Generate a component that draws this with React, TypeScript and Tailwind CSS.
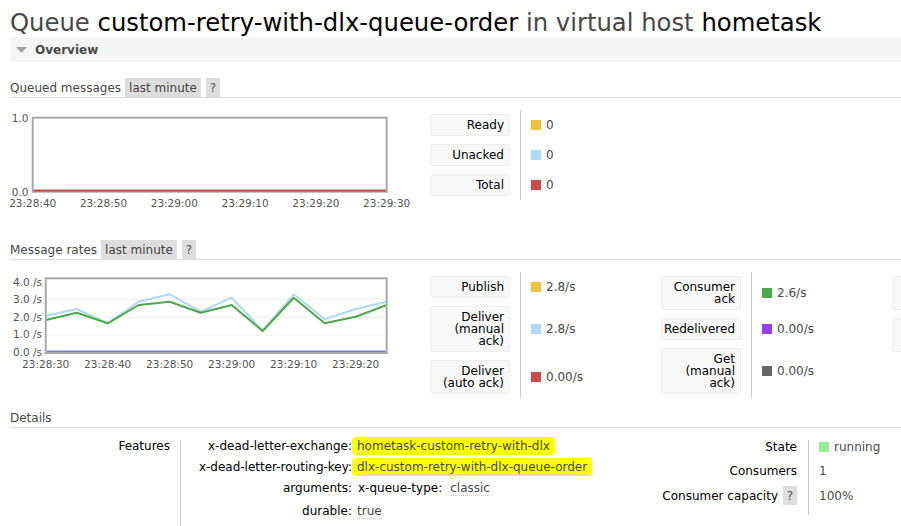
// RabbitMQ management — queue detail page
import { Fragment } from 'react';

type Stat = { lines: string[]; sq: string; value: string };

const queued: Stat[] = [
  { lines: ['Ready'], sq: 'bg-[#edc240]', value: '0' },
  { lines: ['Unacked'], sq: 'bg-[#afd8f8]', value: '0' },
  { lines: ['Total'], sq: 'bg-[#cb4b4b]', value: '0' },
];

const ratesA: Stat[] = [
  { lines: ['Publish'], sq: 'bg-[#edc240]', value: '2.8/s' },
  { lines: ['Deliver', '(manual', 'ack)'], sq: 'bg-[#afd8f8]', value: '2.8/s' },
  { lines: ['Deliver', '(auto ack)'], sq: 'bg-[#cb4b4b]', value: '0.00/s' },
];

const ratesB: Stat[] = [
  { lines: ['Consumer', 'ack'], sq: 'bg-[#4da74d]', value: '2.6/s' },
  { lines: ['Redelivered'], sq: 'bg-[#9440ed]', value: '0.00/s' },
  { lines: ['Get', '(manual', 'ack)'], sq: 'bg-[#666666]', value: '0.00/s' },
];

const ratesC: Stat[] = [
  { lines: ['Get', '(auto ack)'], sq: 'bg-[#bd9b33]', value: '0.00/s' },
  { lines: ['Get', '(empty)'], sq: 'bg-[#8cacc6]', value: '0.00/s' },
];

// rate chart samples, already in svg pixels
const blueY = [44, 37, 51.3, 29.7, 22.3, 39.7, 25.7, 58.7, 22.3, 47.3, 37, 29.7];
const greenY = [48, 40.7, 51.3, 33, 29.7, 40.7, 33, 59, 25.7, 51.3, 44.7, 33];
const pts = (ys: number[]) => ys.map((y, i) => `${(35.7 + i * 31).toFixed(1)},${y}`).join(' ');

function SectionHeader({ title, badge }: { title: string; badge?: boolean }) {
  return (
    <div className="flex h-[20px] items-center border-b border-[#ddd]">
      <span>{title}</span>
      {badge && (
        <>
          <span className="ml-[4px] flex h-[19px] items-center bg-[#dddddd] px-[4px] text-[#444]">last minute</span>
          <span className="ml-[5px] flex h-[19px] w-[14px] items-center justify-center bg-[#dddddd] text-[#555]">?</span>
        </>
      )}
    </div>
  );
}

function StatBlock({ rows }: { rows: Stat[] }) {
  return (
    <div className="grid w-[231px] shrink-0 grid-cols-[80px_1fr] content-start">
      {rows.map((r) => (
        <Fragment key={r.lines.join(' ')}>
          <div className="py-[4px]">
            <div className="whitespace-nowrap rounded-[3px] border border-[#eeeeee] bg-[#f8f8f8] py-[4px] pl-[2px] pr-[5px] text-right leading-[12px] text-black">
              {r.lines.map((l, i) => (
                <div key={i}>{l}</div>
              ))}
            </div>
          </div>
          <div className="ml-[10px] flex items-center border-l border-[#cccccc] pl-[10px]">
            <span className={`h-[10px] w-[10px] shrink-0 ${r.sq}`} />
            <span className="ml-[5px]">{r.value}</span>
          </div>
        </Fragment>
      ))}
    </div>
  );
}

function QueuedChart() {
  const xs = ['23:28:40', '23:28:50', '23:29:00', '23:29:10', '23:29:20', '23:29:30'];
  return (
    <svg width="410" height="100" className="shrink-0" fontFamily="DejaVu Sans" fontSize="10.5" fill="#545454">
      <rect x="22.7" y="7.7" width="354" height="74" fill="white" stroke="#a8a8a8" strokeWidth="2" />
      <line x1="23.7" y1="80.4" x2="375.7" y2="80.4" stroke="#cb4b4b" strokeWidth="2" />
      <text x="18.5" y="12.2" textAnchor="end">1.0</text>
      <text x="18.5" y="85.5" textAnchor="end">0.0</text>
      {xs.map((t, i) => (
        <text key={t} x={22.7 + i * 70.8} y="96.5" textAnchor="middle">
          {t}
        </text>
      ))}
    </svg>
  );
}

function RatesChart() {
  const xs = ['23:28:30', '23:28:40', '23:28:50', '23:29:00', '23:29:10', '23:29:20'];
  const ys = ['4.0 /s', '3.0 /s', '2.0 /s', '1.0 /s', '0.0 /s'];
  return (
    <svg width="410" height="100" className="shrink-0" fontFamily="DejaVu Sans" fontSize="10.5" fill="#545454">
      <rect x="35.7" y="6.3" width="341" height="74.7" fill="white" />
      {[27.3, 45.3, 63].map((y) => (
        <line key={y} x1="36.7" y1={y} x2="375.7" y2={y} stroke="#eeeeee" strokeWidth="1" />
      ))}
      <polyline points={pts(blueY)} fill="none" stroke="#afd8f8" strokeWidth="2" strokeLinejoin="round" />
      <polyline points={pts(greenY)} fill="none" stroke="#4da74d" strokeWidth="2" strokeLinejoin="round" />
      <line x1="36.7" y1="79.8" x2="375.7" y2="79.8" stroke="#7d7dd0" strokeWidth="2.5" />
      <rect x="35.7" y="6.3" width="341" height="74.7" fill="none" stroke="#a8a8a8" strokeWidth="2" />
      {ys.map((t, i) => (
        <text key={t} x="32" y={9.7 + i * 17.65 + 3.8} textAnchor="end">
          {t}
        </text>
      ))}
      {xs.map((t, i) => (
        <text key={t} x={35.7 + i * 62} y="96" textAnchor="middle">
          {t}
        </text>
      ))}
    </svg>
  );
}

function Val({ children, hl }: { children: React.ReactNode; hl?: boolean }) {
  return hl ? (
    <span className="rounded-[4px] bg-[#ffff00] px-[5px] py-[2px]">
      <span className="border-b border-dotted border-[#cccccc]">{children}</span>
    </span>
  ) : (
    <span className="ml-[5px] border-b border-dotted border-[#cccccc]">{children}</span>
  );
}

export default function App() {
  return (
    <div className="h-[526px] w-[901px] overflow-hidden bg-white font-['DejaVu_Sans',sans-serif] text-[12px] text-[#484848]">
      <div className="w-[1100px] pl-[10px] pt-[9px]">
        <h1 className="whitespace-nowrap text-[24.3px] font-normal leading-[28px] text-[#484848]">
          Queue <span className="text-black">custom-retry-with-dlx-queue-order</span> in virtual host{' '}
          <span className="text-black">hometask</span>
        </h1>

        {/* Overview toggle */}
        <div className="flex h-[25px] items-center bg-[#f5f5f5]">
          <svg width="11" height="6" className="ml-[6px]">
            <polygon points="0,0 11,0 5.5,6" fill="#a0a0a0" />
          </svg>
          <span className="ml-[8px] font-bold text-[#484848]">Overview</span>
        </div>

        <div className="mt-[16px]">
          <SectionHeader title="Queued messages" badge />
        </div>
        <div className="mt-[12px] flex">
          <QueuedChart />
          <div className="ml-[10px]">
            <StatBlock rows={queued} />
          </div>
        </div>

        <div className="mt-[30px]">
          <SectionHeader title="Message rates" badge />
        </div>
        <div className="mt-[12px] flex">
          <RatesChart />
          <div className="ml-[10px] flex">
            <StatBlock rows={ratesA} />
            <StatBlock rows={ratesB} />
            <StatBlock rows={ratesC} />
          </div>
        </div>

        <div className="mt-[10px]">
          <SectionHeader title="Details" />
        </div>
        <div className="mt-[7px] flex">
          {/* left: features */}
          <div className="flex w-[640px] shrink-0">
            <div className="flex h-[21px] w-[160px] items-center justify-end text-black">Features</div>
            <div className="ml-[10px] mt-[5px] h-[91px] w-px bg-[#cccccc]" />
            <div className="ml-[10px] grid grid-cols-[161px_auto] grid-rows-[21px_21px_21px_25px] items-center">
              <div className="text-right text-black">x-dead-letter-exchange:</div>
              <div>
                <Val hl>hometask-custom-retry-with-dlx</Val>
              </div>
              <div className="text-right text-black">x-dead-letter-routing-key:</div>
              <div>
                <Val hl>dlx-custom-retry-with-dlx-queue-order</Val>
              </div>
              <div className="text-right text-black">arguments:</div>
              <div className="flex">
                <span className="ml-[6px] text-black">x-queue-type:</span>
                <span className="ml-[3px]">
                  <Val>classic</Val>
                </span>
              </div>
              <div className="text-right text-black">durable:</div>
              <div>
                <Val>true</Val>
              </div>
            </div>
          </div>

          {/* right: state */}
          <div className="flex">
            <div className="w-[147px] text-black">
              <div className="flex h-[23px] items-center justify-end">State</div>
              <div className="flex h-[25px] items-center justify-end">Consumers</div>
              <div className="flex h-[25px] items-center justify-end">
                Consumer capacity
                <span className="ml-[5px] flex h-[19px] w-[14px] items-center justify-center bg-[#dddddd] text-[#555]">?</span>
              </div>
            </div>
            <div className="ml-[11px] mt-[5px] h-[75px] w-px bg-[#cccccc]" />
            <div className="pl-[10px]">
              <div className="flex h-[23px] items-center">
                <span className="h-[10px] w-[10px] bg-[#99ee99]" />
                <span className="ml-[5px]">running</span>
              </div>
              <div className="flex h-[25px] items-center">1</div>
              <div className="flex h-[25px] items-center">100%</div>
            </div>
          </div>
        </div>
      </div>
    </div>
  );
}
